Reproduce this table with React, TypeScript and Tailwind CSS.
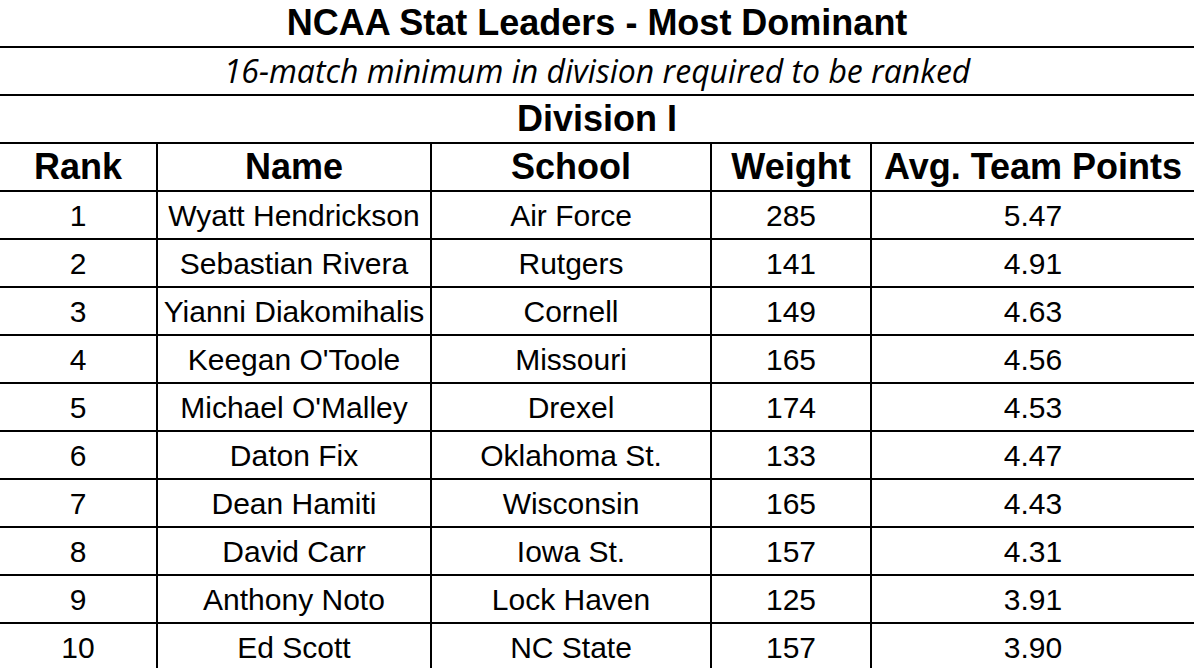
import React from 'react';

const rows = [
    { rank: 1, name: 'Wyatt Hendrickson', school: 'Air Force', weight: 285, avg: '5.47' },
    { rank: 2, name: 'Sebastian Rivera', school: 'Rutgers', weight: 141, avg: '4.91' },
    { rank: 3, name: 'Yianni Diakomihalis', school: 'Cornell', weight: 149, avg: '4.63' },
    { rank: 4, name: "Keegan O'Toole", school: 'Missouri', weight: 165, avg: '4.56' },
    { rank: 5, name: "Michael O'Malley", school: 'Drexel', weight: 174, avg: '4.53' },
    { rank: 6, name: 'Daton Fix', school: 'Oklahoma St.', weight: 133, avg: '4.47' },
    { rank: 7, name: 'Dean Hamiti', school: 'Wisconsin', weight: 165, avg: '4.43' },
    { rank: 8, name: 'David Carr', school: 'Iowa St.', weight: 157, avg: '4.31' },
    { rank: 9, name: 'Anthony Noto', school: 'Lock Haven', weight: 125, avg: '3.91' },
    { rank: 10, name: 'Ed Scott', school: 'NC State', weight: 157, avg: '3.90' },
];

const headers = ['Rank', 'Name', 'School', 'Weight', 'Avg. Team Points'];

const rowGrid = 'grid grid-cols-[158px_274px_280px_160px_1fr] h-12 border-b-2 border-black';

export default function App() {
    return (
        <div className="w-[1194px] h-[668px] overflow-hidden bg-white text-black font-['Liberation_Sans',Arial,sans-serif]">
            <div className="h-12 border-b-2 border-black flex items-center justify-center text-[36px] font-bold leading-none">
                NCAA Stat Leaders - Most Dominant
            </div>
            <div className="h-12 border-b-2 border-black flex items-center justify-center text-[32px] italic leading-none font-['Open_Sans',sans-serif]">
                16-match minimum in division required to be ranked
            </div>
            <div className="h-12 border-b-2 border-black flex items-center justify-center text-[36px] font-bold leading-none">
                Division I
            </div>

            {/* header row */}
            <div className={rowGrid}>
                {headers.map((h, i) => (
                    <div
                        key={h}
                        className={`flex items-center justify-center text-[36px] font-bold leading-none whitespace-nowrap ${i < 4 ? 'border-r-2 border-black' : ''}`}
                    >
                        {h}
                    </div>
                ))}
            </div>

            {rows.map(r => (
                <div key={r.rank} className={rowGrid}>
                    {[r.rank, r.name, r.school, r.weight, r.avg].map((v, i) => (
                        <div
                            key={i}
                            className={`flex items-center justify-center pt-px text-[30px] leading-none whitespace-nowrap ${i < 4 ? 'border-r-2 border-black' : ''}`}
                        >
                            {v}
                        </div>
                    ))}
                </div>
            ))}
        </div>
    );
}
